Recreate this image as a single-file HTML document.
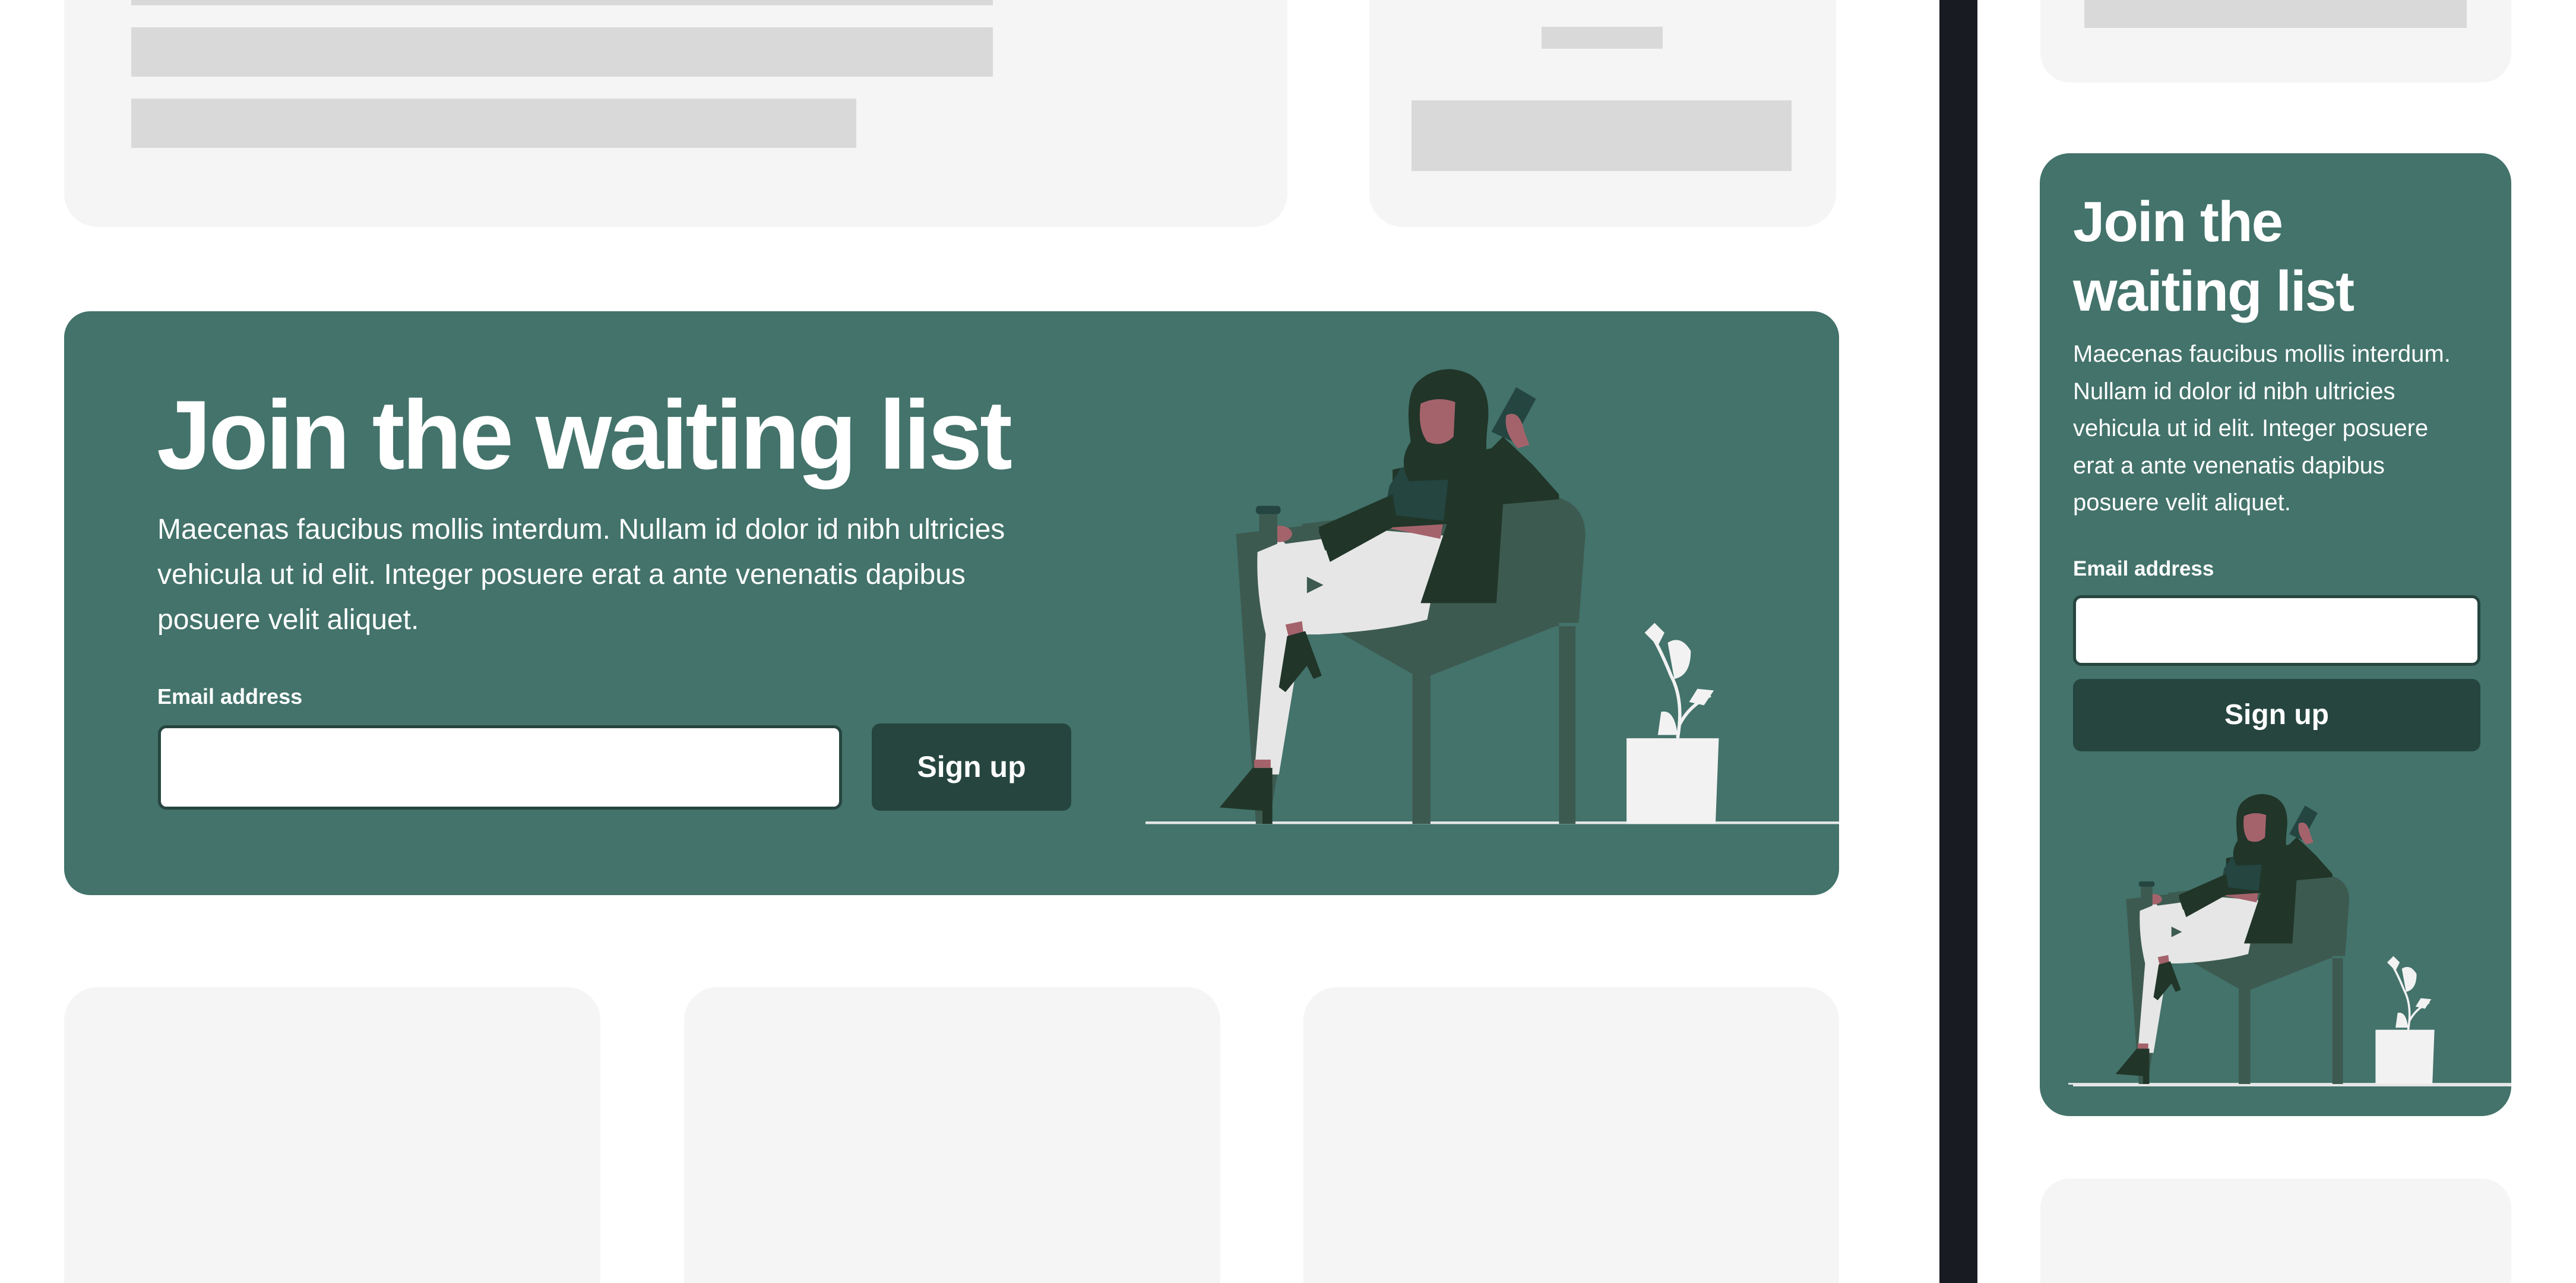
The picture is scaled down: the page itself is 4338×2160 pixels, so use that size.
<!DOCTYPE html>
<html style="width:4338px;height:2160px;overflow:hidden"><head><meta charset="utf-8"><style>
*{margin:0;padding:0;box-sizing:border-box}
body{width:4338px;height:2160px;position:relative;overflow:hidden;background:#fff;font-family:"Liberation Sans",sans-serif}
#root{position:absolute;left:0;top:0;width:4338px;height:2160px;overflow:hidden}
.a{position:absolute}
.card{background:#f5f5f5;border-radius:56px}
.bar{background:#d9d9d9}
.green{background:#43736b}
.w{color:#fff}
</style></head><body><div id="root">
<div class="a card" style="left:108px;top:-100px;width:2060px;height:482px"></div>
<div class="a bar" style="left:221px;top:0;width:1451px;height:9px"></div>
<div class="a bar" style="left:221px;top:46px;width:1451px;height:83px"></div>
<div class="a bar" style="left:221px;top:166px;width:1221px;height:83px"></div>
<div class="a card" style="left:2306px;top:-100px;width:786px;height:482px"></div>
<div class="a bar" style="left:2596px;top:45px;width:204px;height:37px"></div>
<div class="a bar" style="left:2377px;top:169px;width:640px;height:119px"></div>

<div class="a green" style="left:108px;top:524px;width:2989px;height:983px;border-radius:44px;overflow:hidden">
  <div class="a w" style="left:156px;top:108px;font-size:165px;font-weight:bold;letter-spacing:-4.5px;white-space:nowrap;line-height:200px">Join the waiting list</div>
  <div class="a w" style="left:157px;top:330px;font-size:48px;line-height:76px;white-space:nowrap">Maecenas faucibus mollis interdum. Nullam id dolor id nibh ultricies<br>vehicula ut id elit. Integer posuere erat a ante venenatis dapibus<br>posuere velit aliquet.</div>
  <div class="a w" style="left:157px;top:628px;font-size:36px;font-weight:bold">Email address</div>
  <div class="a" style="left:158px;top:697px;width:1152px;height:142px;background:#fff;border:5px solid #26453f;border-radius:14px"></div>
  <div class="a w" style="left:1360px;top:694px;width:336px;height:147px;background:#26453f;border-radius:14px;font-size:50px;font-weight:bold;text-align:center;line-height:147px">Sign up</div>
</div>

<svg class="a" style="left:1929px;top:610px" width="1168" height="783" viewBox="695 220 421 282">
<g id="ill">
 <rect x="695" y="498.5" width="421" height="1.6" fill="#e6e6e6"/>
 <path d="M750 324 L800 318 L790 380 L770 500 L762 500 Z" fill="#3d5a50"/>
 <path d="M790 318 L935 300 Q962 302 962 325 L958 378 L946 378 L946 500 L956 500 L956 380 L944 380 L868 410 L868 500 L857 500 L857 409 L806 380 L790 378 Z" fill="#3d5a50"/>
 <path d="M762 440 L772 440 L772 500 L762 500 Z" fill="#3d5a50"/>
 <path d="M775 330 Q760 300 770 320 L780 330 L840 322 L876 325 L866 376 Q840 383 800 385 L790 385 L776 470 L761 470 L768 385 Q762 360 763 335 Z" fill="#e6e6e6"/>
 <path d="M793 350 L803 355 L793 360 Z" fill="#3d5a50"/>
 <path d="M840 312 L876 315 L874 327 L840 320 Z" fill="#a4636b"/>
 <path d="M780 379 L790 377 L791 385 L782 387 Z" fill="#a4636b"/>
 <path d="M761 461 L771 461 L771 466 L761 466 Z" fill="#a4636b"/>
 <path d="M781 386 L792 383 L802 410 L797 412 L793 404 L780 420 L776 417 Z" fill="#213529"/>
 <path d="M760 466 L772 466 L772 500 L766 500 L766 492 L740 490 L750 478 Z" fill="#213529"/>
 <path d="M845 285 L905 272 L930 290 L946 300 L946 303 L912 306 L908 366 L862 366 L878 318 L845 320 L807 341 L800 320 L845 300 Z" fill="#213529"/>
 <path d="M905 272 L912 265 L930 282 L946 300 L928 300 Z" fill="#213529"/>
 <path d="M850 284 L880 280 L876 316 L840 312 L843 295 Z" fill="#244540"/>
 <path d="M845 300 L800 322 L804 334 L848 318 Z" fill="#213529"/>
 <ellipse cx="776" cy="324" rx="8" ry="5" fill="#a4636b"/>
 <rect x="764" y="310" width="11" height="20" fill="#3d5a50"/>
 <rect x="762" y="307" width="15" height="5" rx="2" fill="#244540"/>
 <path d="M880 224 Q905 226 903 255 Q900 278 905 290 L855 292 Q848 280 856 268 Q852 240 860 232 Q868 224 880 224 Z" fill="#213529"/>
 <path d="M862 245 Q872 240 883 244 L882 265 Q875 272 866 268 Q860 260 862 245 Z" fill="#a4636b"/>
 <path d="M920 235 L932 242 L918 268 L905 262 Z" fill="#244540"/>
 <path d="M914 252 Q922 248 925 262 L928 270 L921 272 Q912 262 914 252 Z" fill="#a4636b"/>
 <path d="M987 448 L1043 448 L1041 500 L987 500 Z" fill="#f2f2f2"/>
 <path d="M1018 448 Q1022 425 1014 410 Q1008 395 1002 385" stroke="#f2f2f2" stroke-width="2" fill="none"/>
 <path d="M1019 440 Q1025 428 1038 422" stroke="#f2f2f2" stroke-width="2" fill="none"/>
 <path d="M998 384 L1004 378 L1010 384 L1006 392 Z M1012 390 Q1020 385 1026 395 Q1026 410 1016 412 Z M1030 418 L1040 419 L1034 428 L1025 426 Z M1008 432 Q1016 430 1018 446 L1006 446 Z" fill="#f2f2f2"/>
</g>
</svg>

<div class="a" style="left:3266px;top:0;width:64px;height:2160px;background:#181b22"></div>

<div class="a card" style="left:3436px;top:-100px;width:793px;height:239px;border-radius:50px"></div>
<div class="a bar" style="left:3510px;top:0;width:644px;height:47px"></div>

<div class="a green" style="left:3435px;top:258px;width:794px;height:1621px;border-radius:50px;overflow:hidden">
  <div class="a w" style="left:56px;top:57px;font-size:96px;font-weight:bold;line-height:117px;letter-spacing:-2px;white-space:nowrap">Join the<br>waiting list</div>
  <div class="a w" style="left:56px;top:307px;font-size:40px;line-height:62.5px;white-space:nowrap">Maecenas faucibus mollis interdum.<br>Nullam id dolor id nibh ultricies<br>vehicula ut id elit. Integer posuere<br>erat a ante venenatis dapibus<br>posuere velit aliquet.</div>
  <div class="a w" style="left:56px;top:680px;font-size:35px;font-weight:bold">Email address</div>
  <div class="a" style="left:56px;top:744px;width:686px;height:119px;background:#fff;border:5px solid #26453f;border-radius:14px"></div>
  <div class="a w" style="left:56px;top:885px;width:686px;height:122px;background:#26453f;border-radius:14px;font-size:48px;font-weight:bold;text-align:center;line-height:122px">Sign up</div>
</div>
<svg class="a" style="left:3483px;top:1329px" width="746" height="501" viewBox="695 220 421 282"><use href="#ill"/></svg>
<div class="a" style="left:3491px;top:1825px;width:738px;height:4px;background:#e6e6e6"></div>

<div class="a card" style="left:108px;top:1662px;width:903px;height:498px;border-radius:56px 56px 0 0"></div>
<div class="a card" style="left:1152px;top:1662px;width:903px;height:498px;border-radius:56px 56px 0 0"></div>
<div class="a card" style="left:2195px;top:1662px;width:902px;height:498px;border-radius:56px 56px 0 0"></div>
<div class="a card" style="left:3436px;top:1984px;width:793px;height:176px;border-radius:50px 50px 0 0"></div>
</div></body></html>
